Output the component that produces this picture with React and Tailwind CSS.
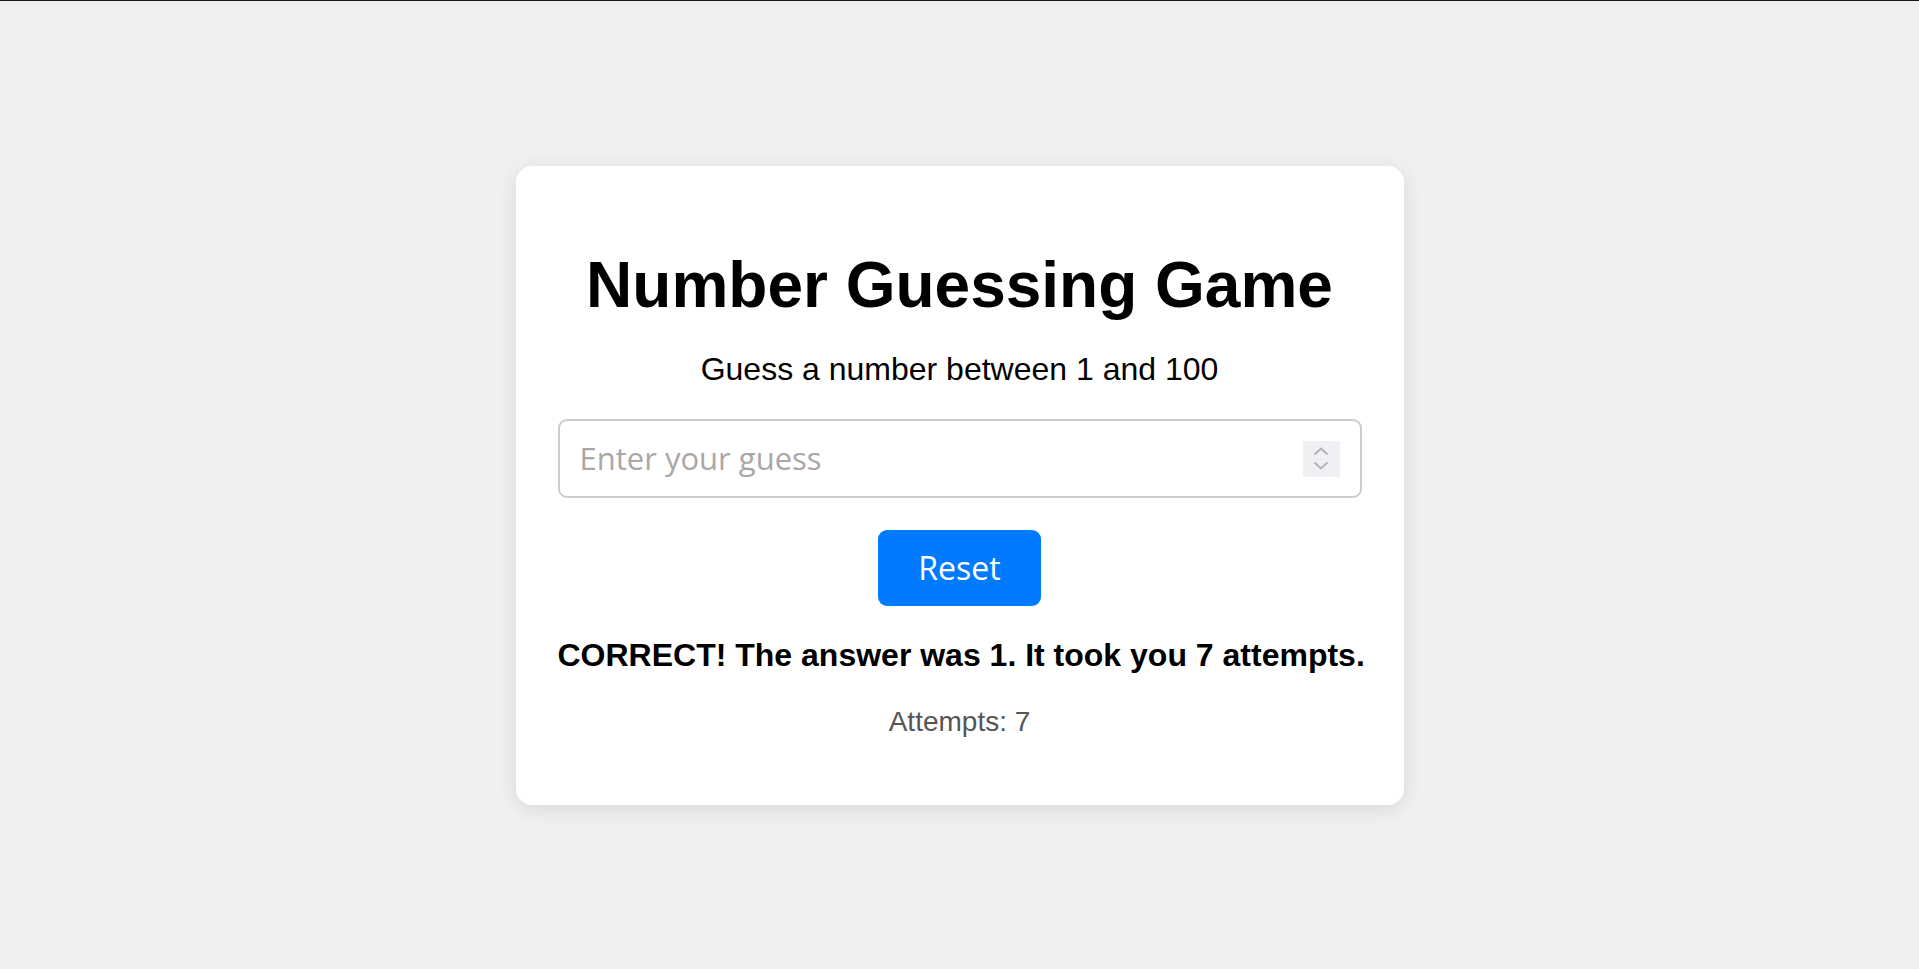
import { useState } from 'react';

export default function App() {
  const [guess, setGuess] = useState('');
  const attempts = 7;

  return (
    <div className="min-h-screen border-t border-[#151515] bg-[#f0f0f0] flex items-center justify-center font-['Liberation_Sans',Arial,sans-serif]">
      {/* Card */}
      <div className="w-[888px] bg-white rounded-[16px] shadow-[0_4px_20px_rgba(0,0,0,0.1)] px-[42px] pt-[40px] pb-[67px] text-center">
        <h1 className="mt-[42px] mb-[29px] text-[64px] leading-[74px] font-bold text-black">
          Number Guessing Game
        </h1>
        <p className="text-[32px] leading-[37px] text-black">Guess a number between 1 and 100</p>

        <div className="relative mt-[31px]">
          <input
            type="text"
            inputMode="numeric"
            value={guess}
            onChange={(e) => setGuess(e.target.value)}
            placeholder="Enter your guess"
            className="w-full h-[79px] border-2 border-[#cccccc] rounded-[9px] px-[20px] text-[31px] font-['Open_Sans',sans-serif] text-black placeholder:text-[#aaa7a7] outline-none"
          />
          {/* spin buttons */}
          <div className="absolute right-[22px] top-[22px] w-[37px] h-[36px] bg-[#f0f0f4] flex flex-col items-center justify-center gap-[5px]">
            <svg width="16" height="9" viewBox="0 0 16 9" fill="none" stroke="#b2b2ba" strokeWidth="2">
              <path d="M1.5 7.5 L8 1.5 L14.5 7.5" />
            </svg>
            <svg width="16" height="9" viewBox="0 0 16 9" fill="none" stroke="#b2b2ba" strokeWidth="2">
              <path d="M1.5 1.5 L8 7.5 L14.5 1.5" />
            </svg>
          </div>
        </div>

        <button
          onClick={() => setGuess('')}
          className="mt-[32px] h-[76px] px-[40px] bg-[#007bff] text-white rounded-[9px] text-[32px] leading-[36px] font-['Open_Sans',sans-serif]"
        >
          Reset
        </button>

        <p className="mt-[31px] text-[32px] leading-[37px] font-bold text-black whitespace-nowrap">
          CORRECT! The answer was 1. It took you {attempts} attempts.
        </p>
        <p className="mt-[32px] text-[28px] leading-[32px] text-[#555555]">Attempts: {attempts}</p>
      </div>
    </div>
  );
}
